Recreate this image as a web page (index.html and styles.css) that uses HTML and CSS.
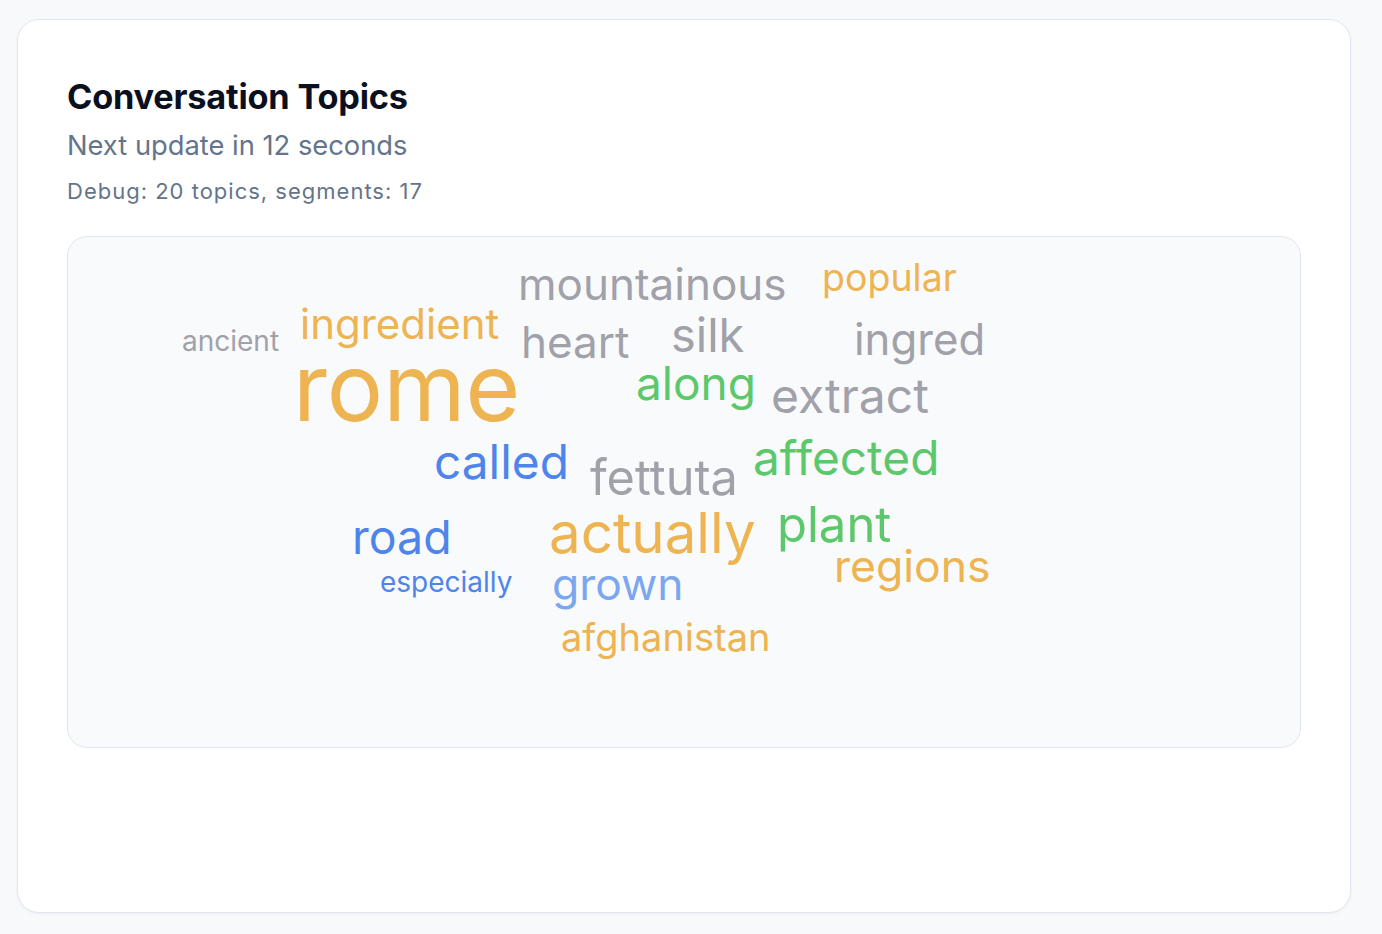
FILE: index.html
```html
<!DOCTYPE html>
<html lang="en">
<head>
<meta charset="utf-8">
<title>Conversation Topics</title>
<link rel="stylesheet" href="styles.css">
</head>
<body>
<div class="page">
  <section class="card">
    <header class="card-header">
      <h1 class="title">Conversation Topics</h1>
      <p class="subtitle">Next update in 12 seconds</p>
      <p class="debug">Debug: 20 topics, segments: 17</p>
    </header>
    <div class="cloud">
      <span class="word gray" style="left:450px;top:25px;font-size:44px">mountainous</span>
      <span class="word orange" style="left:754px;top:22px;font-size:37.5px">popular</span>
      <span class="word orange" style="left:232px;top:66px;font-size:42px">ingredient</span>
      <span class="word gray" style="left:114px;top:90px;font-size:28px">ancient</span>
      <span class="word gray" style="left:453px;top:83px;font-size:44px">heart</span>
      <span class="word gray" style="left:603px;top:74px;font-size:47px">silk</span>
      <span class="word gray" style="left:786px;top:81px;font-size:43.7px">ingred</span>
      <span class="word orange" style="left:225px;top:103px;font-size:94px">rome</span>
      <span class="word green" style="left:568px;top:123px;font-size:46px">along</span>
      <span class="word gray" style="left:703px;top:135px;font-size:48px">extract</span>
      <span class="word blue" style="left:366px;top:202px;font-size:47.8px">called</span>
      <span class="word gray" style="left:522px;top:217px;font-size:48.7px">fettuta</span>
      <span class="word green" style="left:685px;top:198px;font-size:47.8px">affected</span>
      <span class="word blue" style="left:284px;top:277px;font-size:46.5px">road</span>
      <span class="word orange" style="left:481px;top:268px;font-size:56.4px">actually</span>
      <span class="word green" style="left:709px;top:263px;font-size:49px">plant</span>
      <span class="word orange" style="left:766px;top:307px;font-size:44.5px">regions</span>
      <span class="word blue" style="left:312px;top:331px;font-size:28px">especially</span>
      <span class="word lightblue" style="left:484px;top:325px;font-size:44.4px">grown</span>
      <span class="word orange" style="left:493px;top:381px;font-size:38px">afghanistan</span>
    </div>
  </section>
</div>
</body>
</html>
```
FILE: styles.css
```css
* { box-sizing: border-box; }
html, body { margin: 0; padding: 0; }
body {
  background: #f8f9fb;
  font-family: Inter, "Noto Sans", "Liberation Sans", sans-serif;
  width: 1382px;
  height: 934px;
  overflow: hidden;
}
.page {
  padding: 19px 31px 0 17px;
}
.card {
  height: 894px;
  background: #ffffff;
  border: 1px solid #e2e6ee;
  border-radius: 22px;
  padding: 53px 49px 49px;
  box-shadow: 0 1px 3px rgba(15, 23, 42, 0.05);
}
.card-header {
  display: flex;
  flex-direction: column;
}
.title {
  margin: 0;
  font-size: 34.3px;
  line-height: 48px;
  font-weight: 700;
  color: #0b1020;
  letter-spacing: -0.2px;
}
.subtitle {
  margin: 4px 0 0;
  font-size: 27.3px;
  line-height: 42px;
  color: #64748b;
}
.debug {
  margin: 9px 0 0;
  font-size: 22px;
  line-height: 30px;
  letter-spacing: 1px;
  color: #64748b;
}
.cloud {
  position: relative;
  margin-top: 30px;
  height: 512px;
  background: #f9fafc;
  border: 1px solid #e2e6ee;
  border-radius: 20px;
}
.word {
  position: absolute;
  line-height: 1;
  white-space: nowrap;
  font-weight: 400;
}
.gray { color: #a1a1aa; }
.orange { color: #edb451; }
.green { color: #5cc86b; }
.blue { color: #4f84ea; }
.lightblue { color: #7ba7f0; }
```
